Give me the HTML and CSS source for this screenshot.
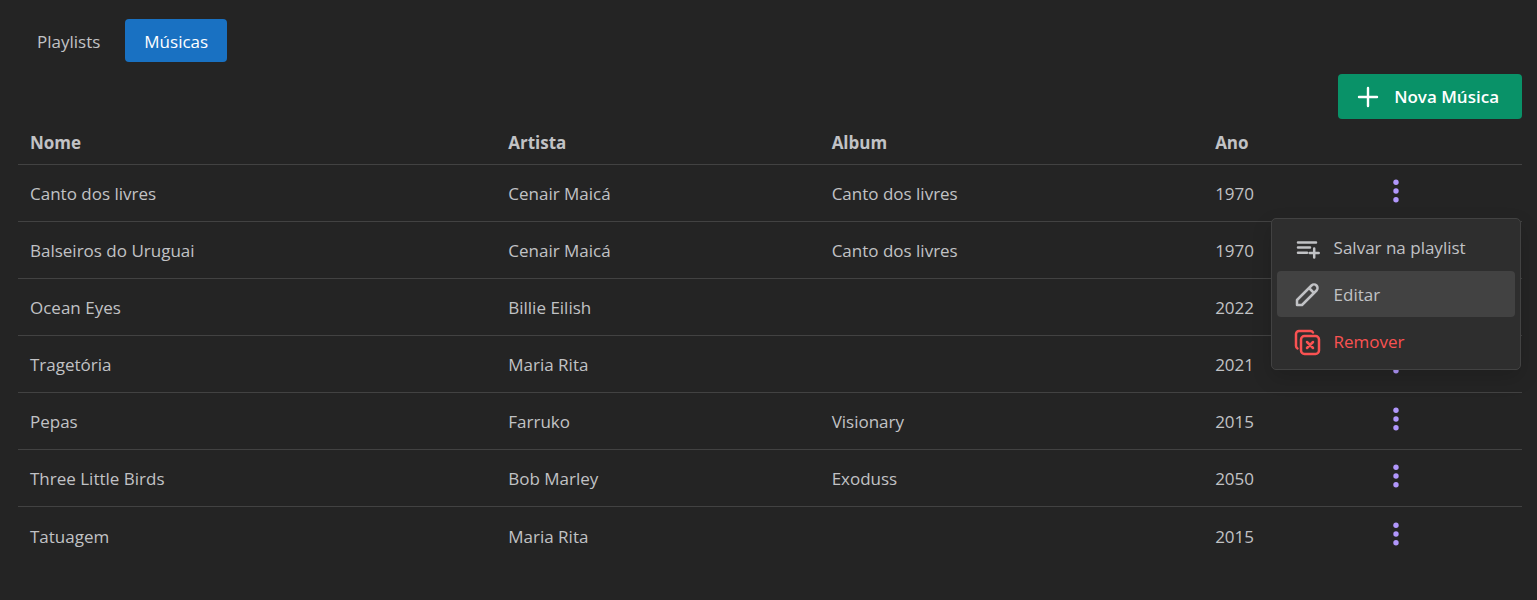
FILE: index.html
```html
<!DOCTYPE html>
<html lang="pt-BR">
<head>
<meta charset="utf-8">
<title>Músicas</title>
<link rel="stylesheet" href="styles.css">
</head>
<body>
<svg class="sprite" aria-hidden="true">
  <symbol id="dots" viewBox="0 0 30 30">
    <circle cx="15" cy="6.300" r="2.700"/><circle cx="15" cy="15" r="2.700"/><circle cx="15" cy="23.700" r="2.700"/>
  </symbol>
</svg>
<main class="page">
  <nav class="tabs" role="tablist">
    <button class="tab" type="button" role="tab" aria-selected="false">Playlists</button>
    <button class="tab tab-active" type="button" role="tab" aria-selected="true">Músicas</button>
  </nav>
  <div class="toolbar">
    <button class="new-button" type="button">
      <svg class="new-icon" viewBox="0 0 28 28" aria-hidden="true"><path d="M14 5v18M5 14h18"/></svg>
      Nova Música
    </button>
  </div>
  <table class="songs">
    <colgroup><col class="col-name"><col class="col-artist"><col class="col-album"><col class="col-year"><col></colgroup>
    <thead>
      <tr><th scope="col">Nome</th><th scope="col">Artista</th><th scope="col">Album</th><th scope="col">Ano</th><td></td></tr>
    </thead>
    <tbody>
      <tr><td>Canto dos livres</td><td>Cenair Maicá</td><td>Canto dos livres</td><td>1970</td>
        <td>
          <div class="actions">
            <button class="more" type="button" aria-label="Ações" aria-expanded="true"><svg class="dots"><use href="#dots"/></svg></button>
            <div class="menu" role="menu">
              <button class="item" type="button" role="menuitem">
                <svg class="item-icon" viewBox="0 0 28 28" aria-hidden="true"><path d="M5 8.500h18M5 13.500h12M5 18.700h9M21.200 14.500v9M16.700 19h9"/></svg>
                Salvar na playlist
              </button>
              <button class="item item-active" type="button" role="menuitem">
                <svg class="item-icon" viewBox="0 0 28 28" aria-hidden="true"><path d="M4 24v-5L18.500 4.500a3.500 3.500 0 0 1 5 5L9 24zM16 7l5 5"/></svg>
                Editar
              </button>
              <button class="item item-danger" type="button" role="menuitem">
                <svg class="item-icon" viewBox="0 0 28 28" aria-hidden="true"><rect x="8" y="8" width="18" height="18" rx="3.500"/><path d="M4.500 20.500A3 3 0 0 1 3 18V6a3 3 0 0 1 3-3h11.500a3 3 0 0 1 2.500 1.500M14 14l6 6M20 14l-6 6"/></svg>
                Remover
              </button>
            </div>
          </div>
        </td></tr>
      <tr><td>Balseiros do Uruguai</td><td>Cenair Maicá</td><td>Canto dos livres</td><td>1970</td><td><button class="more" type="button" aria-label="Ações"><svg class="dots"><use href="#dots"/></svg></button></td></tr>
      <tr><td>Ocean Eyes</td><td>Billie Eilish</td><td></td><td>2022</td><td><button class="more" type="button" aria-label="Ações"><svg class="dots"><use href="#dots"/></svg></button></td></tr>
      <tr><td>Tragetória</td><td>Maria Rita</td><td></td><td>2021</td><td><button class="more" type="button" aria-label="Ações"><svg class="dots"><use href="#dots"/></svg></button></td></tr>
      <tr><td>Pepas</td><td>Farruko</td><td>Visionary</td><td>2015</td><td><button class="more" type="button" aria-label="Ações"><svg class="dots"><use href="#dots"/></svg></button></td></tr>
      <tr><td>Three Little Birds</td><td>Bob Marley</td><td>Exoduss</td><td>2050</td><td><button class="more" type="button" aria-label="Ações"><svg class="dots"><use href="#dots"/></svg></button></td></tr>
      <tr><td>Tatuagem</td><td>Maria Rita</td><td></td><td>2015</td><td><button class="more" type="button" aria-label="Ações"><svg class="dots"><use href="#dots"/></svg></button></td></tr>
    </tbody>
  </table>
</main>
</body>
</html>
```
FILE: styles.css
```css
* { box-sizing: border-box; }

body {
  margin: 0;
  background: #242424;
  color: #c1c2c5;
  font: 17px/24px "Segoe UI", "Open Sans", "Noto Sans", sans-serif;
}

button {
  border: 0;
  background: none;
  color: inherit;
  font: inherit;
  cursor: pointer;
}

.sprite { display: none; }

.page { padding: 19px 15px 0 18px; }

.tabs {
  display: flex;
  gap: 6px;
}

.tab {
  height: 43px;
  padding: 2px 19px 0;
  border-radius: 4px;
}

.tab-active {
  background: #1971c2;
  color: #fff;
}

.toolbar {
  display: flex;
  justify-content: flex-end;
  margin-top: 12px;
}

.new-button {
  display: flex;
  align-items: center;
  gap: 12px;
  height: 45px;
  padding: 1px 23px 0 16px;
  border-radius: 4px;
  background: #099268;
  color: #fff;
  font-weight: 600;
}

.new-icon {
  width: 28px;
  height: 28px;
  fill: none;
  stroke: currentColor;
  stroke-width: 2.4;
  stroke-linecap: round;
}

.songs {
  width: 100%;
  margin-top: 1px;
  table-layout: fixed;
  border-collapse: separate;
  border-spacing: 0;
}

.col-name { width: 31.8%; }
.col-artist { width: 21.5%; }
.col-album { width: 25.5%; }
.col-year { width: 11%; }

.songs th,
.songs td {
  padding: 2px 12px 0;
  border-bottom: 1px solid #424242;
  text-align: left;
}

.songs thead tr { height: 45px; }
.songs tbody tr { height: 57px; }
.songs tbody tr:last-child td { border-bottom: 0; }

.actions {
  position: relative;
  width: 30px;
}

.more {
  display: block;
  margin-bottom: 6px;
  padding: 0;
}

.dots {
  display: block;
  width: 30px;
  height: 30px;
  fill: #b197fc;
}

.menu {
  position: absolute;
  top: 42px;
  left: 50%;
  z-index: 1;
  display: grid;
  gap: 1px;
  width: 250px;
  margin-left: -125px;
  padding: 5px;
  border: 1px solid #424242;
  border-radius: 5px;
  background: #2e2e2e;
  box-shadow: 0 8px 20px rgba(0, 0, 0, 0.15);
}

.item {
  display: flex;
  align-items: center;
  gap: 13px;
  height: 46px;
  padding: 1px 16px 0;
  border-radius: 4px;
}

.item-active { background: #424242; }
.item-danger { color: #fa5252; }

.item-icon {
  width: 28px;
  height: 28px;
  fill: none;
  stroke: currentColor;
  stroke-width: 2.5;
  stroke-linecap: round;
  stroke-linejoin: round;
}
```
